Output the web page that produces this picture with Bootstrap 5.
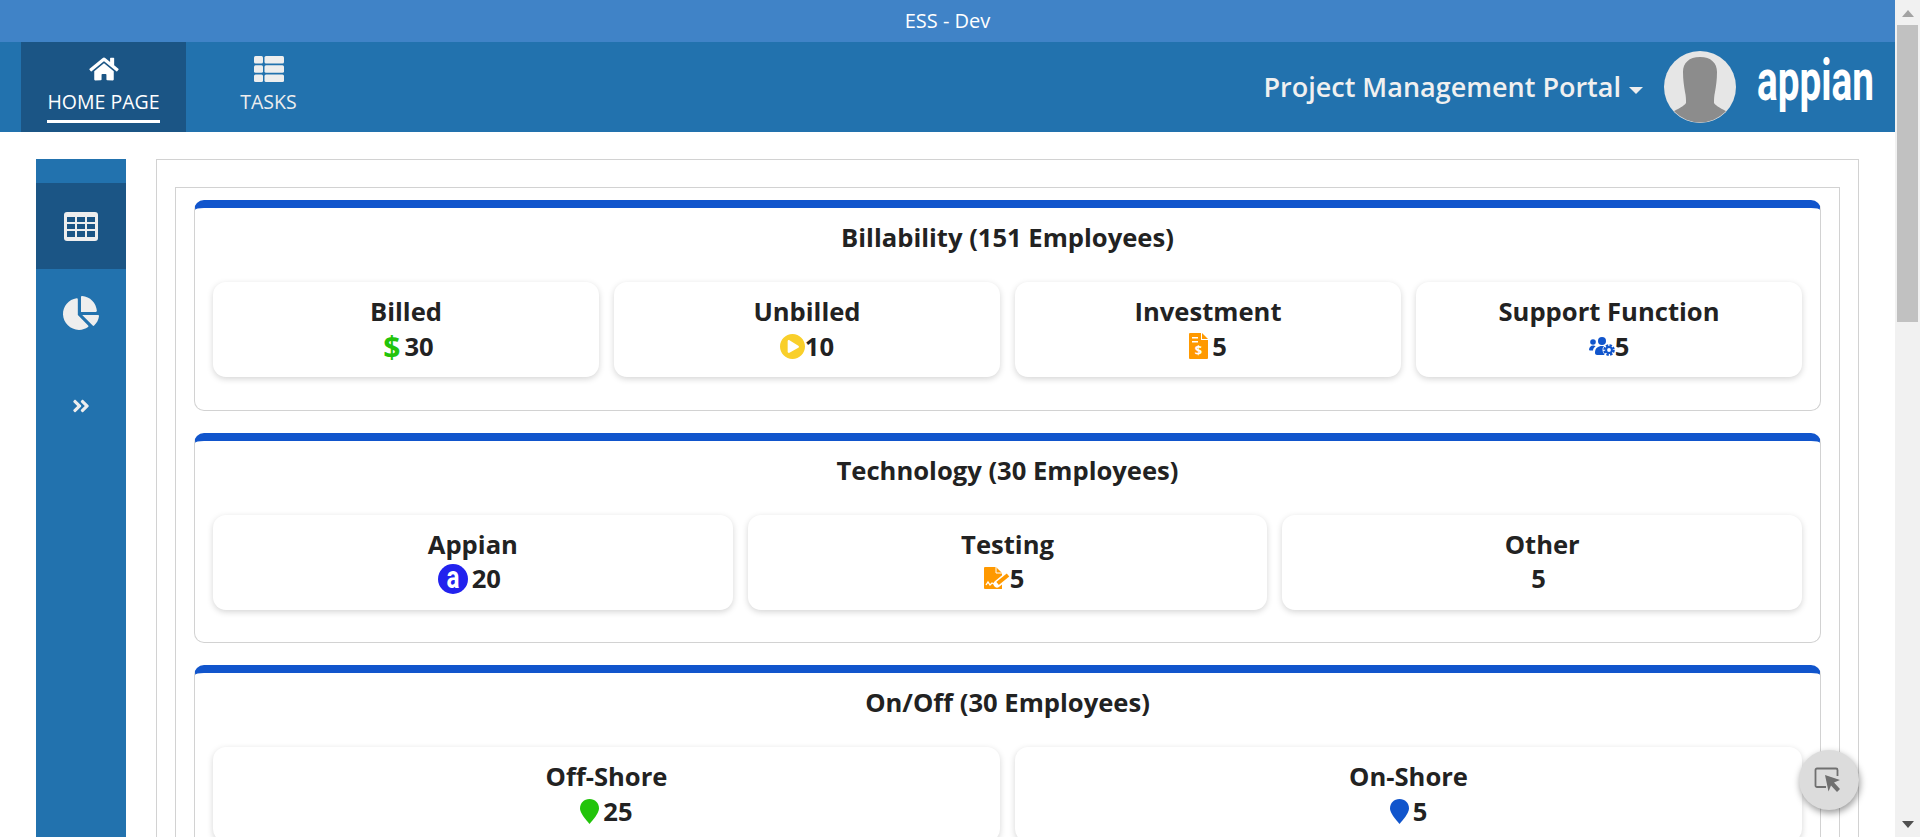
<!DOCTYPE html>
<html lang="en">
<head>
  <meta charset="UTF-8">
  <title>ESS - Dev</title>
  <link href="https://cdn.jsdelivr.net/npm/bootstrap@5.3.3/dist/css/bootstrap.min.css" rel="stylesheet">
  <style>
    html, body { height: 837px; overflow: hidden; }
    body { font-family: "Open Sans", "Liberation Sans", sans-serif; color: #222; background: #fff; }
    svg { overflow: visible; }
    .app-main { width: 1895px; height: 837px; overflow: hidden; }
    .fake-scroll { width: 25px; height: 837px; background: #f1f1f1; }
    .fake-scroll i { display: block; }
    .scroll-up { border: 6px solid transparent; border-top: 0; border-bottom: 7px solid #a3a3a3; margin: 10px auto 0; width: 0; }
    .scroll-thumb { width: 21px; height: 297px; background: #c1c1c1; margin: 8px 0 0 2px; }
    .scroll-down { border: 6px solid transparent; border-bottom: 0; border-top: 7px solid #505050; margin: 499px auto 0; width: 0; }
    .title-bar { height: 42px; background: #4083c7; color: #fff; font-size: 20px; }
    .top-nav { height: 90px; background: #2272ae; padding: 0 21px; }
    .top-link { width: 165px; height: 90px; color: #eee; font-size: 19.5px; text-decoration: none; padding-top: 14px; }
    .top-link.on { background: #1b5585; color: #fff; }
    .top-link span { display: block; line-height: 26px; height: 36px; margin-top: 5px; padding: 2px 0 0; }
    .top-link.on span { border-bottom: 3px solid #fff; }
    .top-icon { height: 26px; display: block; }
    .portal-name { color: #f0f0f0; font-size: 27px; font-weight: 600; }
    .portal-caret { border: 7px solid transparent; border-bottom: 0; border-top: 7px solid #eee; margin: 6px 21px 0 8px; }
    .avatar-img { width: 72px; height: 72px; display: block; margin-right: 21px; }
    .logo-img { width: 117px; height: 90px; display: block; }
    .work-area { padding: 27px 36px 0 36px; gap: 30px; }
    .side-rail { width: 90px; height: 678px; flex: none; background: #2272ae; padding-top: 24px; }
    .rail-item { height: 86px; }
    .rail-item.on { background: #1b5585; }
    .rail-item.chart { height: 88px; }
    .rail-item.more { height: 88px; padding-top: 10px; }
    .outer-box { flex: 1 1 0; height: 800px; border: 1px solid #d2d2d2; padding: 27px 18px 0; }
    .inner-box { height: 800px; border: 1px solid #d2d2d2; padding: 12px 18px 0; }
    .group-card { height: 210.5px; border: 1px solid #d2d2d2; border-top: 8px solid #1155cc; border-radius: 10px; margin-bottom: 22px; padding: 0 18px; }
    .group-title { font-size: 25.6px; font-weight: 700; text-align: center; height: 74px; padding-top: 13px; line-height: 33px; margin: 0; }
    .tile-row { --bs-gutter-x: 15px; }
    .tile-box { height: 95px; background: #fff; border-radius: 13px; box-shadow: 0 2px 6px rgba(0,0,0,.17); text-align: center; padding-top: 13px; }
    .tile-name { font-size: 25.6px; font-weight: 700; line-height: 33px; }
    .tile-val { font-size: 25.6px; font-weight: 700; line-height: 33px; height: 36px; }
    .val-left { padding-right: 7px; }
    .val-right { padding-left: 5px; }
    .dollar-mark { color: #22c40a; font-size: 30px; }
    .pick-btn { position: absolute; left: 1799px; top: 750px; width: 60px; height: 60px; border-radius: 50%; background: #dcdcdc; box-shadow: 1px 3px 7px rgba(0,0,0,.4); }
  </style>
</head>
<body>
  <div class="d-flex">
    <div class="app-main">
      <div class="title-bar d-flex align-items-center justify-content-center">ESS - Dev</div>

      <nav class="top-nav d-flex align-items-center">
        <a href="#" class="top-link on d-flex flex-column align-items-center">
          <svg class="top-icon" width="30" height="26" viewBox="0 0 576 512" fill="#fff"><path d="M280.37 148.26L96 300.11V464a16 16 0 0 0 16 16l112.06-.29a16 16 0 0 0 15.92-16V368a16 16 0 0 1 16-16h64a16 16 0 0 1 16 16v95.64a16 16 0 0 0 16 16.05L464 480a16 16 0 0 0 16-16V300L295.67 148.26a12.19 12.19 0 0 0-15.3 0zM571.6 251.47L488 182.56V44.05a12 12 0 0 0-12-12h-56a12 12 0 0 0-12 12v72.61L318.47 43a48 48 0 0 0-61 0L4.34 251.47a12 12 0 0 0-1.6 16.9l25.5 31A12 12 0 0 0 45.15 301l235.22-193.74a12.19 12.19 0 0 1 15.3 0L530.9 301a12 12 0 0 0 16.9-1.6l25.5-31a12 12 0 0 0-1.7-16.93z"/></svg>
          <span>HOME PAGE</span>
        </a>
        <a href="#" class="top-link d-flex flex-column align-items-center">
          <svg class="top-icon" width="30" height="26" viewBox="0 0 30 26" fill="#eee">
            <rect x="0" y="0" width="9" height="7.6" rx="1.5"/><rect x="10.5" y="0" width="19.5" height="7.6" rx="1.5"/>
            <rect x="0" y="9.2" width="9" height="7.6" rx="1.5"/><rect x="10.5" y="9.2" width="19.5" height="7.6" rx="1.5"/>
            <rect x="0" y="18.4" width="9" height="7.6" rx="1.5"/><rect x="10.5" y="18.4" width="19.5" height="7.6" rx="1.5"/>
          </svg>
          <span>TASKS</span>
        </a>
        <div class="ms-auto d-flex align-items-center">
          <span class="portal-name">Project Management Portal</span>
          <i class="portal-caret"></i>
          <svg class="avatar-img" viewBox="0 0 72 72">
            <defs><clipPath id="avaClip"><circle cx="36" cy="36" r="35.5"/></clipPath></defs>
            <circle cx="36" cy="36" r="36" fill="#e6e6e6"/>
            <path clip-path="url(#avaClip)" fill="#8c8c8c" d="M36 6c-11 0-17 6-17 15 0 8 1 14 2 20 1 4 1 8 1 11-2 3-8 6-14 9l6 11h44l6-11c-6-3-12-6-14-9 0-3 0-7 1-11 1-6 2-12 2-20 0-9-6-15-17-15z"/>
          </svg>
          <svg class="logo-img" viewBox="0 0 117 90">
            <text x="0" y="58" textLength="117" lengthAdjust="spacingAndGlyphs" font-family="Roboto, 'Liberation Sans', sans-serif" font-weight="700" font-size="57" fill="#fff">appian</text>
          </svg>
        </div>
      </nav>

      <div class="work-area d-flex">
        <div class="side-rail">
          <div class="rail-item on d-flex align-items-center justify-content-center">
            <svg width="34" height="29" viewBox="0 0 34 29">
              <rect width="34" height="29" rx="3" fill="#eee"/>
              <g fill="#1b5585">
                <rect x="3" y="5" width="8" height="5"/><rect x="13" y="5" width="8" height="5"/><rect x="23" y="5" width="8" height="5"/>
                <rect x="3" y="12" width="8" height="5"/><rect x="13" y="12" width="8" height="5"/><rect x="23" y="12" width="8" height="5"/>
                <rect x="3" y="19" width="8" height="6"/><rect x="13" y="19" width="8" height="6"/><rect x="23" y="19" width="8" height="6"/>
              </g>
            </svg>
          </div>
          <div class="rail-item chart d-flex align-items-center justify-content-center">
            <svg width="36" height="34" viewBox="0 0 544 512" fill="#eee"><path d="M527.79 288H290.5l158.03 158.03c6.04 6.04 15.98 6.53 22.19.68 38.7-36.46 65.32-85.61 73.13-140.86 1.34-9.46-6.51-17.85-16.06-17.85zm-15.83-64.8C503.72 103.74 408.26 8.28 288.8.04 279.68-.59 272 7.1 272 16.24V240h223.77c9.14 0 16.82-7.68 16.19-16.8zM224 288V50.71c0-9.55-8.39-17.4-17.84-16.06C86.99 51.49-4.1 155.6.14 280.37 4.5 408.51 114.83 513.59 243.03 511.98c50.4-.63 96.97-16.87 135.26-44.03 7.9-5.6 8.42-17.23 1.57-24.08L224 288z"/></svg>
          </div>
          <div class="rail-item more d-flex align-items-center justify-content-center">
            <svg width="18" height="20" viewBox="0 0 448 512" fill="#eee"><path d="M224.3 273l-136 136c-9.4 9.4-24.6 9.4-33.9 0l-22.6-22.6c-9.4-9.4-9.4-24.6 0-33.9l96.4-96.4-96.4-96.4c-9.4-9.4-9.4-24.6 0-33.9L54.3 103c9.4-9.4 24.6-9.4 33.9 0l136 136c9.5 9.4 9.5 24.6.1 34zm192-34l-136-136c-9.4-9.4-24.6-9.4-33.9 0l-22.6 22.6c-9.4 9.4-9.4 24.6 0 33.9l96.4 96.4-96.4 96.4c-9.4 9.4-9.4 24.6 0 33.9l22.6 22.6c9.4 9.4 24.6 9.4 33.9 0l136-136c9.4-9.2 9.4-24.4 0-33.8z"/></svg>
          </div>
        </div>

        <div class="outer-box">
          <div class="inner-box">

            <!-- Billability -->
            <div class="group-card">
              <h2 class="group-title">Billability (151 Employees)</h2>
              <div class="row tile-row">
                <div class="col"><div class="tile-box">
                  <div class="tile-name">Billed</div>
                  <div class="tile-val val-right d-flex justify-content-center align-items-center gap-1"><span class="dollar-mark">$</span><span>30</span></div>
                </div></div>
                <div class="col"><div class="tile-box">
                  <div class="tile-name">Unbilled</div>
                  <div class="tile-val d-flex justify-content-center align-items-center">
                    <svg width="25" height="25" viewBox="8 8 496 496" fill="#f9cf2a"><path d="M256 8C119 8 8 119 8 256s111 248 248 248 248-111 248-248S393 8 256 8zm115.7 272l-176 101c-15.8 8.8-35.7-2.5-35.7-20V152c0-17.4 19.8-28.8 35.7-20l176 107c16.4 9.2 16.4 32.9 0 41z"/></svg>
                    <span>10</span></div>
                </div></div>
                <div class="col"><div class="tile-box">
                  <div class="tile-name">Investment</div>
                  <div class="tile-val d-flex justify-content-center align-items-center">
                    <svg width="19" height="26" viewBox="0 0 19 26" class="me-1"><path d="M0 1a1 1 0 0 1 1-1h11v7h7v18a1 1 0 0 1-1 1H1a1 1 0 0 1-1-1z" fill="#f90"/><path d="M13 0l6 6h-6z" fill="#f90"/><path d="M3 4h6v1.5H3zM3 8h6v1.5H3z" fill="#fff"/><text x="9.5" y="22" font-size="13" font-weight="700" text-anchor="middle" fill="#fff">$</text></svg>
                    <span>5</span></div>
                </div></div>
                <div class="col"><div class="tile-box">
                  <div class="tile-name">Support Function</div>
                  <div class="tile-val d-flex justify-content-center align-items-center">
                    <svg width="26" height="19" viewBox="0 0 26 19" fill="#1155cc">
                      <circle cx="4" cy="5" r="2.8"/><path d="M0 13c0-3 2-4.5 4-4.5 1 0 2 .3 2.5 1C5 10.5 4 12 4 13.5H1c-.6 0-1-.3-1-.5z"/>
                      <circle cx="13" cy="4" r="4"/><path d="M6 16c0-5 3-7 7-7 1 0 2 .1 3 .5-1 1-1.5 3-1 5 0 1 .5 2 1 3.5H8c-1 0-2-1-2-2z"/>
                      <circle cx="20" cy="13" r="6.5" fill="#fff"/>
                      <circle cx="20" cy="13" r="4.6" fill="none" stroke="#1155cc" stroke-width="2.4" stroke-dasharray="2.4 1.2"/>
                      <circle cx="20" cy="13" r="2.9" fill="none" stroke="#1155cc" stroke-width="2"/>
                    </svg>
                    <span>5</span></div>
                </div></div>
              </div>
            </div>

            <!-- Technology -->
            <div class="group-card">
              <h2 class="group-title">Technology (30 Employees)</h2>
              <div class="row tile-row">
                <div class="col"><div class="tile-box">
                  <div class="tile-name">Appian</div>
                  <div class="tile-val val-left d-flex justify-content-center align-items-center gap-1">
                    <svg width="30" height="30" viewBox="0 0 30 30"><circle cx="15" cy="15" r="15" fill="#2222ee"/><text x="15" y="24" textLength="13" lengthAdjust="spacingAndGlyphs" font-family="Roboto, sans-serif" font-size="31" font-weight="700" text-anchor="middle" fill="#fff">a</text></svg>
                    <span>20</span></div>
                </div></div>
                <div class="col"><div class="tile-box">
                  <div class="tile-name">Testing</div>
                  <div class="tile-val val-left d-flex justify-content-center align-items-center">
                    <svg width="26" height="23" viewBox="0 0 26 23">
                      <path d="M0 1a1 1 0 0 1 1-1h11l6 6v16H1a1 1 0 0 1-1-1z" fill="#f90"/>
                      <path d="M12 0v6h6" fill="none" stroke="#fff" stroke-width="1"/>
                      <path d="M2 18l2-3 2 3 2-2 2 1" fill="none" stroke="#fff" stroke-width="1.3"/>
                      <path d="M13 17L24 8" stroke="#fff" stroke-width="7" stroke-linecap="round"/>
                      <path d="M13.5 16.5L24 8" stroke="#f90" stroke-width="4"/>
                      <path d="M10.5 19l1.5-4 2.5 3z" fill="#fff"/>
                    </svg>
                    <span>5</span></div>
                </div></div>
                <div class="col"><div class="tile-box">
                  <div class="tile-name">Other</div>
                  <div class="tile-val val-left d-flex justify-content-center align-items-center"><span>5</span></div>
                </div></div>
              </div>
            </div>

            <!-- On/Off -->
            <div class="group-card">
              <h2 class="group-title">On/Off (30 Employees)</h2>
              <div class="row tile-row">
                <div class="col"><div class="tile-box">
                  <div class="tile-name">Off-Shore</div>
                  <div class="tile-val d-flex justify-content-center align-items-center">
                    <svg width="19" height="25" viewBox="0 0 19 25" class="me-1"><path d="M9.5 0C4 0 0 4 0 9.5 0 14 6 21 9.5 25 13 21 19 14 19 9.5 19 4 15 0 9.5 0z" fill="#22c40a"/></svg>
                    <span>25</span></div>
                </div></div>
                <div class="col"><div class="tile-box">
                  <div class="tile-name">On-Shore</div>
                  <div class="tile-val d-flex justify-content-center align-items-center">
                    <svg width="19" height="25" viewBox="0 0 19 25" class="me-1"><path d="M9.5 0C4 0 0 4 0 9.5 0 14 6 21 9.5 25 13 21 19 14 19 9.5 19 4 15 0 9.5 0z" fill="#1155cc"/></svg>
                    <span>5</span></div>
                </div></div>
              </div>
            </div>

          </div>
        </div>
      </div>
    </div>

    <div class="fake-scroll">
      <i class="scroll-up"></i>
      <i class="scroll-thumb"></i>
      <i class="scroll-down"></i>
    </div>
  </div>

  <button type="button" class="pick-btn btn p-0 border-0 d-flex align-items-center justify-content-center">
    <svg width="30" height="26" viewBox="0 0 30 26">
      <path d="M12 20H3a1.5 1.5 0 0 1-1.5-1.5V3A1.5 1.5 0 0 1 3 1.5h19A1.5 1.5 0 0 1 23.5 3v6" fill="none" stroke="#707070" stroke-width="1.8"/>
      <path d="M11 8l15 5-6 2.5 6 6.5-3 3-6-6.5-2.5 6z" fill="#707070"/>
    </svg>
  </button>

  <script src="https://cdn.jsdelivr.net/npm/bootstrap@5.3.3/dist/js/bootstrap.bundle.min.js"></script>
</body>
</html>
